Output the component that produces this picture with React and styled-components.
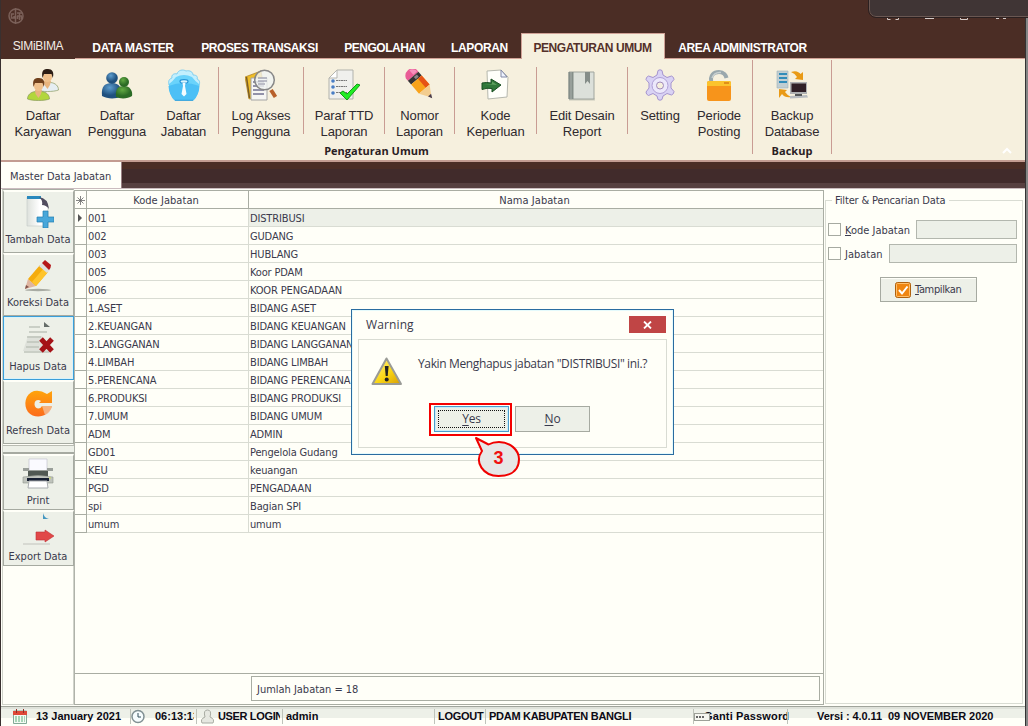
import React from 'react';
import styled, { createGlobalStyle, css } from 'styled-components';

const GlobalStyle = createGlobalStyle`
  * { box-sizing: border-box; }
  html, body { margin: 0; padding: 0; overflow: hidden; }
  body { background: #fffff8; }
`;

const ui = css`
  font-family: "DejaVu Sans Condensed", "DejaVu Sans", sans-serif;
  font-size: 11px;
  letter-spacing: -0.2px;
  color: #3a3a4c;
`;
const arial = css`
  font-family: "Liberation Sans", Arial, sans-serif;
`;

const Window = styled.div`
  position: relative;
  width: 1028px;
  height: 726px;
  overflow: hidden;
  display: flex;
  flex-direction: column;
  background: #fffff8;
  border-left: 1px solid #39302f;
  white-space: nowrap;
  ${ui}
`;
const Edge = styled.div`
  position: absolute;
  right: 0;
  top: 18px;
  bottom: 0;
  width: 3px;
  background: #858585;
  border-left: 1px solid #333;
`;
const TitleBar = styled.div`
  height: 33px;
  background: #4b2d25;
  padding: 8px 0 0 7px;
  flex: none;
`;
const CornerPanel = styled.div`
  position: absolute;
  left: 868px;
  top: -10px;
  width: 180px;
  height: 27px;
  background: #403535;
  border: 1px solid #6a5752;
  outline: 1px solid #2b2020;
  border-radius: 0 0 0 7px;
`;
const CornerMarks = styled.svg`
  position: absolute;
  left: 884px;
  top: 18px;
`;
const TabBar = styled.div`
  display: flex;
  height: 26px;
  flex: none;
  background: #4b2d25;
`;
const AppTab = styled.div`
  ${arial}
  width: 74px;
  font-size: 12px;
  letter-spacing: -0.35px;
  line-height: 27px;
  text-align: center;
  color: #f4ece6;
`;
const Tab = styled.div`
  ${arial}
  width: ${(p) => p.$w}px;
  height: 26px;
  font-size: 12px;
  font-weight: bold;
  letter-spacing: ${(p) => p.$ls ?? -0.42}px;
  padding-right: ${(p) => p.$pr ?? 0}px;
  line-height: ${(p) => (p.$active ? 28 : 30)}px;
  text-align: center;
  color: ${(p) => (p.$active ? '#54302a' : '#fff')};
  background: ${(p) => (p.$active ? '#f6f0de' : 'transparent')};
  border: solid #d0a297;
  border-width: ${(p) => (p.$active ? '1px 1px 0' : '0 0 1px')};
`;
const TabFill = styled.div`
  flex: 1;
  border-bottom: 1px solid #d0a297;
`;
const Ribbon = styled.div`
  position: relative;
  display: flex;
  height: 103px;
  flex: none;
  background: #f6f0de;
  border-bottom: 2px solid #c39c91;
`;
const RibbonGroup = styled.div`
  display: flex;
  flex-direction: column;
  width: ${(p) => p.$w}px;
  height: 94px;
  margin-top: 1px;
  border-right: 1px solid #c99c93;
`;
const RibbonItems = styled.div`
  display: flex;
  height: 81px;
  flex: none;
  padding-top: 7px;
`;
const RibbonItem = styled.div`
  ${arial}
  width: ${(p) => p.$w}px;
  height: 67px;
  border-right: ${(p) => (p.$sep ? '1px solid #c99c93' : '0')};
  display: flex;
  flex-direction: column;
  align-items: center;
  padding-top: 2px;
  font-size: 13px;
  letter-spacing: -0.12px;
  line-height: 16px;
  text-align: center;
  white-space: pre;
  color: #2f2a2e;
  svg { flex: none; margin-bottom: 7px; }
`;
const GroupTitle = styled.div`
  font-family: "Open Sans", "Noto Sans", sans-serif;
  font-weight: bold;
  font-size: 11px;
  letter-spacing: 0.02px;
  line-height: 20px;
  flex: none;
  text-align: center;
  color: #2a2024;
`;
const Collapse = styled.svg`
  position: absolute;
  left: 1001px;
  top: 88px;
`;
const DocTabs = styled.div`
  height: 26px;
  flex: none;
  background: linear-gradient(#4b2d25 0 7px, #412b2b 7px 21px, #574040 21px 26px);
`;
const DocTab = styled.div`
  width: 121px;
  height: 26px;
  background: #fffff8;
  border-right: 1px solid #9a8084;
  padding-left: 9px;
  line-height: 29px;
  letter-spacing: 0;
`;
const Body = styled.div`
  display: flex;
  width: 1024px;
  height: 518px;
  flex: none;
  border-top: 1px solid #cbbcbf;
  padding-left: 1px;
`;
const Sidebar = styled.div`
  width: 72px;
  height: 516px;
  border: 1px solid #d0d3ca;
  border-top-color: #a9ada3;
  display: flex;
  flex-direction: column;
`;
const ToolButton = styled.div`
  width: 71px;
  height: ${(p) => p.$h}px;
  flex: none;
  background: #edf0e8;
  border: 1px solid ${(p) => (p.$focus ? '#3b9ed8' : '#a6aaa1')};
  border-top: ${(p) => (p.$focus ? '1px solid #3b9ed8' : '2px solid #fffff8')};
  box-shadow: ${(p) => (p.$focus ? 'inset 0 0 0 1px #d8f3fa' : 'none')};
  display: flex;
  flex-direction: column;
  align-items: center;
  justify-content: flex-end;
  padding-bottom: ${(p) => p.$pb ?? 4}px;
  padding-right: 1px;
  line-height: 16px;
  letter-spacing: ${(p) => p.$ls ?? -0.03}px;
  svg { flex: none; margin-bottom: ${(p) => p.$gap ?? 3}px; }
`;
const ToolGap = styled.div`
  height: 9px;
  width: 71px;
  flex: none;
  background: #edf0e8;
  border-top: 1px solid #b9bcb3;
  border-bottom: 2px solid #a6aaa1;
  margin-top: 1px;
`;
const GridPanel = styled.div`
  width: 750px;
  height: 515px;
  margin-top: 1px;
  display: flex;
  flex-direction: column;
  border: 1px solid #a9ada3;
  border-left-color: #b0b3aa;
`;
const GridRow = styled.div`
  display: grid;
  grid-template-columns: 12px 162px 1fr;
  height: 18px;
  line-height: 17px;
`;
const HeadCell = styled.div`
  height: 18px;
  line-height: 19px;
  text-align: center;
  padding-right: 3px;
  letter-spacing: 0.05px;
  border-right: ${(p) => (p.$last ? 0 : 1)}px solid #a9ada3;
  border-bottom: 1px solid #a9ada3;
`;
const MarkCell = styled(HeadCell)`
  padding: 5px 0 0 1px;
  svg { display: block; }
`;
const Gutter = styled.div`
  border-right: 1px solid #a9ada3;
  border-bottom: 1px solid #a9ada3;
  display: flex;
  align-items: center;
  justify-content: center;
`;
const Cell = styled.div`
  padding-left: 1px;
  line-height: 19px;
  height: 18px;
  letter-spacing: -0.15px;
  overflow: hidden;
  background: ${(p) => (p.$sel ? '#edf0e8' : 'transparent')};
  border-bottom: 1px solid #d9dcd3;
  border-right: ${(p) => (p.$last ? 0 : 1)}px solid #d9dcd3;
`;
const GridFoot = styled.div`
  margin-top: auto;
  height: 31px;
  border-top: 1px solid #a9ada3;
  padding: 2px 3px 3px 176px;
`;
const Summary = styled.div`
  height: 25px;
  border: 1px solid #a9ada3;
  padding-left: 5px;
  line-height: 25px;
  letter-spacing: -0.02px;
`;
const FilterBox = styled.div`
  position: relative;
  width: 198px;
  height: 504px;
  margin: 11px 0 0 1px;
  border: 1px solid #d9dcd3;
  padding: 19px 5px 0 2px;
`;
const Legend = styled.div`
  position: absolute;
  left: 6px;
  top: -9px;
  padding: 0 4px 0 3px;
  line-height: 18px;
  letter-spacing: -0.15px;
  background: #fffff8;
`;
const FilterRow = styled.div`
  display: flex;
  align-items: center;
  height: 19px;
  margin-bottom: 5px;
  letter-spacing: 0;
  span { padding-top: 1px; }
  u { text-underline-offset: 1px; }
`;
const Check = styled.div`
  width: 13px;
  height: 13px;
  border: 1px solid #a6aaa1;
  margin-right: 4px;
`;
const Field = styled.div`
  margin-left: auto;
  width: ${(p) => p.$w}px;
  height: 19px;
  background: #edf0e8;
  border: 1px solid #b3b7ae;
`;
const ShowButton = styled.div`
  width: 97px;
  height: 25px;
  margin: 14px 0 0 52px;
  display: flex;
  align-items: center;
  gap: 4px;
  padding-left: 14px;
  letter-spacing: -0.35px;
  background: #edf0e8;
  border: 1px solid #a6aaa1;
  box-shadow: inset 0 1px #fffff8;
`;
const StatusBar = styled.div`
  ${arial}
  display: flex;
  height: 20px;
  flex: none;
  width: 1024px;
  font-size: 11px;
  font-weight: bold;
  color: #0c0a14;
  border-top: 1px solid #a0a49b;
  background: linear-gradient(#dfe2da 0 2px, #edf0e8 2px 11px, #fffff8 11px);
  padding-left: 12px;
`;
const StatusCell = styled.div`
  width: ${(p) => p.$w}px;
  height: 15px;
  margin-top: 2px;
  line-height: 14px;
  flex: none;
  letter-spacing: ${(p) => p.$ls ?? 0}px;
  padding-left: ${(p) => p.$pl ?? 3}px;
  border-left: ${(p) => (p.$sep ? '1px solid #bfc3ba' : '0')};
  svg { display: block; }
`;
const Inline = styled.div`
  display: flex;
  align-items: flex-start;
  gap: ${(p) => p.$gap}px;
  width: ${(p) => p.$w}px;
  overflow: ${(p) => (p.$w ? 'hidden' : 'visible')};
  svg { flex: none; }
`;
const Covered = styled.span`
  margin-left: -6px;
`;
const FrontIcon = styled.svg`
  position: relative;
  z-index: 1;
  margin-top: 4px;
`;

const Dialog = styled.div`
  position: absolute;
  left: 350px;
  top: 309px;
  width: 323px;
  height: 146px;
  border: 1px solid #2a6ca0;
  box-shadow: inset 0 0 0 1px #e4fafc;
  background: #fffff8;
  font-family: "Open Sans", "Noto Sans", sans-serif;
  font-size: 12px;
  letter-spacing: -0.2px;
  padding: 6px;
`;
const DialogHead = styled.div`
  display: flex;
  justify-content: space-between;
  height: 23px;
  padding: 0 1px 0 8px;
  line-height: 18px;
  letter-spacing: 0.12px;
`;
const Close = styled.div`
  width: 37px;
  height: 17px;
  background: #c04545;
  display: flex;
  align-items: center;
  justify-content: center;
`;
const DialogBody = styled.div`
  width: 309px;
  height: 109px;
  border: 1px solid #d9dcd3;
  padding: 17px 0 0 12px;
`;
const Message = styled.div`
  display: flex;
  gap: 15px;
  height: 49px;
  line-height: 13px;
  font-size: 12px;
  letter-spacing: -0.36px;
`;
const DialogButtons = styled.div`
  display: flex;
  gap: 6px;
  padding-left: 63px;
`;
const DialogButton = styled.div`
  position: relative;
  width: 75px;
  height: 26px;
  line-height: 24px;
  text-align: center;
  background: #edf0e8;
  border: 1px solid ${(p) => (p.$primary ? '#4b9bcb' : '#a6aaa1')};
  box-shadow: ${(p) => (p.$primary ? 'inset 0 0 0 1px #c9ecf8' : 'none')};
  u { text-underline-offset: 2px; }
`;
const FocusRect = styled.div`
  position: absolute;
  inset: 3px;
  border: 1px dotted #111;
`;
const Highlight = styled.div`
  position: absolute;
  left: 428px;
  top: 403px;
  width: 83px;
  height: 33px;
  border: 2px solid #f40000;
`;
const Callout = styled.div`
  ${arial}
  position: absolute;
  left: 469px;
  top: 434px;
  width: 56px;
  height: 46px;
  padding: 12px 0 0 1px;
  text-align: center;
  font-size: 18px;
  font-weight: bold;
  letter-spacing: 0;
  line-height: 24px;
  color: #f01010;
  svg { position: absolute; left: 0; top: 0; }
  span { position: relative; }
`;

const Person = ({ x, y, body, hair }) => (
  <g transform={`translate(${x} ${y})`}>
    <path d="M.5 21c0-4 3-7 8-7.500h6c5 .5 8 3.500 8 7.500-5 2-17 2-22 0z" fill={body} stroke="#8a9a60" strokeWidth=".7" />
    <path d="M8 12h7l-1 4-2.500 4-3-4z" fill="#e8b47e" />
    <ellipse cx="11.500" cy="7.500" rx="4.600" ry="5.500" fill="#efc08c" />
    <path d="M6.500 9C5 1 8 0 12 0s6.500 3 4.800 9L15.500 5 8 5z" fill={hair} />
  </g>
);

const Icons = {
  employees: (
    <svg width="32" height="32" viewBox="0 0 32 32">
      <Person x={9} y={0} body="#e6eef2" hair="#2c1d14" />
      <Person x={0} y={9} body="#b2d63c" hair="#70401c" />
    </svg>
  ),
  users: (
    <svg width="32" height="32" viewBox="0 0 32 32">
      <defs>
        <radialGradient id="ub" cx=".4" cy=".3"><stop stopColor="#5d9dce" /><stop offset="1" stopColor="#20517f" /></radialGradient>
        <radialGradient id="ug" cx=".4" cy=".3"><stop stopColor="#62aa42" /><stop offset="1" stopColor="#2b6b25" /></radialGradient>
      </defs>
      <path d="M1 27c-1-10 3-13 10-13s11 5 9 14c-6 2-14 2-19-1z" fill="url(#ub)" />
      <circle cx="11" cy="9" r="5.800" fill="url(#ub)" />
      <path d="M15 28c-1-8 2-11 8-11s9 5 8 10c-4 3-12 3-16 1z" fill="url(#ug)" />
      <circle cx="23" cy="13" r="5" fill="url(#ug)" />
    </svg>
  ),
  jabatan: (
    <svg width="34" height="32" viewBox="0 0 34 32">
      <path d="M2 16c-1-4 0-6 3-7-1-3 2-5 5-4 1-4 6-5 9-3 4-1 7 1 7 4 4 0 5 2 4 4 3 1 3 4 2 7z" fill="#c3effd" stroke="#6cc6f0" strokeWidth=".8" />
      <path d="M2 15Q6 12 9 8q8-4 16 0 3 4 7 7 1 10-6 16H8Q1 25 2 15z" fill="#6ad3fb" />
      <path d="M1.500 17q15-6 31 0-.5 9-6 14.500h-19Q2 26 1.500 17z" fill="#4cc0f6" />
      <path d="M8 31.300h18" stroke="#2e9fdb" strokeWidth="1" />
      <ellipse cx="17" cy="12.500" rx="4" ry="1.800" fill="#d8f5ff" stroke="#2695d8" strokeWidth="1.200" />
      <path d="M15.500 14h3l-.5 3 1.500 8-2.500 2.500-2.500-2.500L16 17z" fill="#f4fcff" />
    </svg>
  ),
  log: (
    <svg width="32" height="32" viewBox="0 0 32 32">
      <path d="M0 8 16 2l4 23L4 30z" fill="#efbd28" stroke="#a77a16" strokeWidth=".7" />
      <path d="m1.500 8 3 21" stroke="#795c27" strokeWidth="1.500" />
      <path d="M6 9h16v22H6z" fill="#f6f6f4" stroke="#a4a4a4" />
      <path d="M8 13h11M8 17h11M8 21h11M8 25h11" stroke="#717191" strokeWidth="1.300" />
      <path d="m26 21 4.500 7" stroke="#b8602a" strokeWidth="4" />
      <circle cx="19.500" cy="11" r="9.800" fill="#f0f4f2" fillOpacity=".8" stroke="#878787" strokeWidth="1.500" />
      <path d="M13 9h9M13 12h9M13 15h7" stroke="#85859b" strokeWidth="1.200" />
    </svg>
  ),
  paraf: (
    <svg width="32" height="32" viewBox="0 0 32 32">
      <path d="M9 1h16v29H1V9z" fill="#f0f0ed" stroke="#b1b2ac" />
      <path d="M1 9h8V1z" fill="#fff" stroke="#b5b5b0" />
      {[12, 18, 24].map((y) => (
        <g key={y}><circle cx="5" cy={y} r="1.800" fill="#487dc5" /><path d={`M8 ${y - 0.5}h11`} stroke="#777" strokeDasharray="2 .5" /></g>
      ))}
      <path d="m12 24 3-2 4 3 10-10 3 1-13 15z" fill="#20ee24" stroke="#159a1a" />
    </svg>
  ),
  pencil: (
    <svg width="32" height="32" viewBox="0 0 32 32">
      <g transform="translate(8.500 6.500) rotate(49)">
        <path d="M-2-7q-5 2-5 7t5 7h3V-7z" fill="#e95c96" />
        <path d="M-2-6q-4 2-4 5h6v-5z" fill="#f590bd" />
        <path d="M1-7h5V7H1z" fill="#353235" />
        <path d="M2-4h3v4H2z" fill="#8b8588" />
        <path d="M6-7h12V7H6z" fill="#f9a31b" />
        <path d="M6-7h12v5H6z" fill="#e65316" />
        <path d="M18-7 29 0 18 7z" fill="#f3cd8f" />
        <path d="m26-2 4 2-4 2z" fill="#473b4b" />
      </g>
    </svg>
  ),
  kode: (
    <svg width="32" height="32" viewBox="0 0 32 32">
      <path d="M7 2 21 1l7 7-1 20-19 2z" fill="#fffffa" stroke="#b6b8ae" />
      <path d="m21 1 0 7h6z" fill="#eef3ff" stroke="#8289a5" />
      <path d="M2 14q5-1 9 0v-4l10 6-9 7v-3.500q-5-1-10 1z" fill="#30783a" stroke="#194f22" />
      <path d="M4 15h8v-2.500l5 3.500z" fill="#5fa260" />
    </svg>
  ),
  book: (
    <svg width="32" height="32" viewBox="0 0 32 32">
      <path d="M3 29.500h26v2H3z" fill="#9fa39c" opacity=".5" />
      <path d="M3 3h25v27H3z" fill="#dce0da" stroke="#a0a59e" />
      <path d="M2.500 3h5v27h-5z" fill="#858e89" />
      <path d="M5 3v27" stroke="#aab1ad" />
      <path d="M19 3h5v12l-2.500-3-2.500 3z" fill="#858d89" />
    </svg>
  ),
  gear: (
    <svg width="32" height="32" viewBox="0 0 32 32">
      <path d="M14 1.500q2-1.500 4 0l1 4.500 4 2.500 4.500-1.500q2.500 1 2.500 3.500l-3 3.500v5l3 3.500q0 2.500-2.500 3.500L23 24.500 19 27l-1 3.500q-2 1.500-4 0L13 27l-4-2.500L4.500 26.500Q2 25.500 2 23l3-4v-5l-3-3.500Q2 8 4.500 7L9 8.500 13 6z" fill="#d9d2f4" stroke="#a594cf" />
      <circle cx="16" cy="16.500" r="8" fill="#ece8fb" stroke="#b0a0d7" />
      <circle cx="16" cy="16.500" r="3.500" fill="#f6f0de" stroke="#a18abb" />
    </svg>
  ),
  lock: (
    <svg width="32" height="32" viewBox="0 0 32 32">
      <path d="M8.500 14C6.500 6 11 3 16 3S23 7 23.500 9" fill="none" stroke="#9aa8ad" strokeWidth="4" />
      <path d="M9 9C10.500 5 14 3 18 3.500" fill="none" stroke="#c8d0d1" strokeWidth="1.500" />
      <rect x="4" y="12" width="24" height="20" rx="2" fill="#f7941b" />
      <path d="M4 17v-3q0-2 2-2h20q2 0 2 2v3z" fill="#fbc32d" />
      <path d="M21 14h5" stroke="#d97d12" strokeWidth="1.500" />
    </svg>
  ),
  backup: (
    <svg width="32" height="32" viewBox="0 0 32 32">
      <path d="M1 2h11v17H1z" fill="#c1ced2" stroke="#9db1b9" strokeWidth=".6" />
      <path d="M3 5h8M3 9h8M3 13h8" stroke="#318cb9" strokeWidth="1.800" />
      <path d="M15 3c5-2 8 0 9.500 2l2.500-2v8l-8-1 2-2q-2-3.500-6-5z" fill="#e99a16" />
      <path d="m3 20 8 1-2 2q2 3 6 5-6 1-9-3l-3 4z" fill="#e99a16" />
      <path d="M14 13h17v12H14z" fill="#aeb0b2" />
      <path d="M15.500 14.500H30V23H15.500z" fill="#302027" />
      <path d="m14 27 17-1 1 2.500-18 1z" fill="#b8bcc0" />
      <path d="M19 25h7v2h-7z" fill="#55585a" />
    </svg>
  ),
  add: (
    <svg width="32" height="32" viewBox="0 0 32 32">
      <defs><linearGradient id="pg"><stop stopColor="#dde1dc" /><stop offset=".6" stopColor="#fff" /></linearGradient></defs>
      <path d="M5 1h13l8 9v20H5z" fill="url(#pg)" stroke="#c5cac6" strokeWidth=".6" />
      <path d="M5 0h14v3H5z" fill="#2988bd" />
      <path d="M17 1q9 1 10 12-3-4-7-4 1-5-3-8z" fill="#514d60" />
      <path d="M21 15h5v6h6v5h-6v6h-5v-6h-6v-5h6z" fill="#48a7da" stroke="#237faf" strokeWidth=".7" />
    </svg>
  ),
  edit: (
    <svg width="32" height="32" viewBox="0 0 32 32">
      <ellipse cx="16" cy="30" rx="13" ry="1.200" fill="#a8aba3" />
      <path d="m3 29 3-10 8 7z" fill="#dfb5a0" />
      <path d="m3 29 1-4 3 2z" fill="#82544b" />
      <path d="M6 19 18 5l8 7-12 14z" fill="#f5ac0c" />
      <path d="m10 22 12-14 4 4-12 14z" fill="#ffc42b" />
      <path d="m17 6 3-3 8 7-3 3z" fill="#dedfdf" />
      <path d="m20 3 3-3 6 5q0 3-2 5z" fill="#b5171a" />
    </svg>
  ),
  remove: (
    <svg width="32" height="32" viewBox="0 0 32 32">
      <path d="M6 14h14l7 15H1z" fill="#d6d9d2" opacity=".65" />
      <path d="M7 5h11M7 10h18M5 15h14M5 20h12M4 25h13M2 30h25" stroke="#bfc3bb" strokeWidth="1.500" />
      <path d="M22 0v5h6z" fill="#666d69" />
      <path d="m19 17 11 12m0-12L19 29" stroke="#a51217" strokeWidth="5" />
    </svg>
  ),
  refresh: (
    <svg width="32" height="32" viewBox="0 0 32 32">
      <defs><linearGradient id="rg" x1="0" x2="0" y1="0" y2="1"><stop stopColor="#ffa40c" /><stop offset="1" stopColor="#fc6c1c" /></linearGradient></defs>
      <path d="M25 6Q18 1.500 12 3C3 6 1 17 6 24c7 8 21 5 24-6H20c-2 4-7 3-7.500-1.500-.3-4.500 4-5.500 6.500-3.500l-2 2h13V3z" fill="url(#rg)" />
      <path d="M20 18h10q-1.500 7-7 9z" fill="#f3c4a4" opacity=".75" />
    </svg>
  ),
  print: (
    <svg width="32" height="32" viewBox="0 0 32 32">
      <path d="M7 1h18v12H7z" fill="#fafaff" stroke="#bcbccb" strokeWidth=".6" />
      <path d="M1 10h6v2h18v-2h6v3H1z" fill="#9a9f9a" />
      <path d="M6 13h20v6H6z" fill="#505852" />
      <path d="M1 19q15-3 30 0v6H1z" fill="#bfc3bc" stroke="#92978f" strokeWidth=".6" />
      <path d="M5 20h22v3H5z" fill="#182032" />
      <path d="M7 23h18l1 7H6z" fill="#fff" stroke="#a9adb0" />
      <path d="M27 20h2" stroke="#d1df58" />
    </svg>
  ),
  exportData: (
    <svg width="32" height="34" viewBox="0 0 32 34">
      <path d="M21 0q1 5 6 6h-6z" fill="#4597c0" />
      <path d="M1 31h27" stroke="#cfd2cb" strokeWidth="1.500" />
      <path d="M14 19h9v-2l9 6-9 6v-2h-9z" fill="#e14848" stroke="#bf3036" strokeWidth=".6" />
    </svg>
  ),
};

const ribbonMain = [
  ['Daftar\nKaryawan', 'employees', 84],
  ['Daftar\nPengguna', 'users', 64],
  ['Daftar\nJabatan', 'jabatan', 70, true],
  ['Log Akses\nPengguna', 'log', 85, true],
  ['Paraf TTD\nLaporan', 'paraf', 81, true],
  ['Nomor\nLaporan', 'pencil', 70, true],
  ['Kode\nKeperluan', 'kode', 82, true],
  ['Edit Desain\nReport', 'book', 91, true],
  ['Setting', 'gear', 64],
  ['Periode\nPosting', 'lock', 54],
];

const rows = [
  ['001', 'DISTRIBUSI'], ['002', 'GUDANG'], ['003', 'HUBLANG'], ['005', 'Koor PDAM'],
  ['006', 'KOOR PENGADAAN'], ['1.ASET', 'BIDANG ASET'], ['2.KEUANGAN', 'BIDANG KEUANGAN'],
  ['3.LANGGANAN', 'BIDANG LANGGANAN'], ['4.LIMBAH', 'BIDANG LIMBAH'], ['5.PERENCANA', 'BIDANG PERENCANA'],
  ['6.PRODUKSI', 'BIDANG PRODUKSI'], ['7.UMUM', 'BIDANG UMUM'], ['ADM', 'ADMIN'],
  ['GD01', 'Pengelola Gudang'], ['KEU', 'keuangan'], ['PGD', 'PENGADAAN'], ['spi', 'Bagian SPI'], ['umum', 'umum'],
];

function DateCell() {
  return (
    <Inline $gap={9}>
      <svg width="14" height="15" viewBox="0 0 14 15"><path d="M.5 2h13v12.500H.5z" fill="#f4faf4" stroke="#83aa97" /><path d="M0 2h14v4H0z" fill="#df4938" /><path d="M3.500 0v4M10.500 0v4" stroke="#8d302a" /><path d="M2 8h10M2 10h10M2 12h10" stroke="#5ab278" strokeDasharray="2 1" /></svg>
      13 January 2021
    </Inline>
  );
}
function TimeCell() {
  return (
    <Inline $gap={10} $w={63}>
      <svg width="14" height="15" viewBox="0 0 14 15"><circle cx="7" cy="7.500" r="6" fill="#f6fcfd" stroke="#819093" strokeWidth="1.500" /><path d="M7 4v4h3" fill="none" stroke="#334f5b" /></svg>
      06:13:13
    </Inline>
  );
}
function UserCell() {
  return (
    <Inline $gap={4} $w={79}>
      <svg width="13" height="15" viewBox="0 0 13 15"><path d="M1 14q-2-4 3-6-2-7 2.500-7T9 8q5 2 3 6z" fill="#e6e8e1" stroke="#a8aba2" /></svg>
      USER LOGIN
    </Inline>
  );
}
function PasswordCell() {
  return (
    <Inline $gap={0}>
      <FrontIcon width="16" height="8" viewBox="0 0 16 8"><rect x=".5" y=".5" width="15" height="7" fill="#f5f6f0" stroke="#9da098" /><path d="M2 4h9" stroke="#666" strokeWidth="2" strokeDasharray="2 1" /></FrontIcon>
      <Covered>Ganti Password</Covered>
    </Inline>
  );
}

export default function App() {
  return (
    <Window>
      <GlobalStyle />
      <TitleBar>
        <svg width="16" height="16" viewBox="0 0 16 16" fill="none" stroke="#7b6059" strokeWidth="1.500">
          <circle cx="8" cy="8" r="7" />
          <path d="M7.500 0v16M6 6H3.500v4H6V8M9 5h5M9 8h5M11.500 5v7M9.500 11V8M13.500 11V8" />
        </svg>
      </TitleBar>
      <TabBar>
        <AppTab>SIMiBIMA</AppTab>
        <Tab $w={116} $ls={-0.35}>DATA MASTER</Tab>
        <Tab $w={137}>PROSES TRANSAKSI</Tab>
        <Tab $w={114} $pr={1} $ls={-0.5}>PENGOLAHAN</Tab>
        <Tab $w={79} $ls={-0.36} $pr={4}>LAPORAN</Tab>
        <Tab $w={144} $active $pr={1}>PENGATURAN UMUM</Tab>
        <Tab $w={156} $pr={1}>AREA ADMINISTRATOR</Tab>
        <TabFill />
      </TabBar>
      <Ribbon>
        <RibbonGroup $w={752}>
          <RibbonItems>
            {ribbonMain.map(([label, icon, w, sep]) => (
              <RibbonItem key={icon} $w={w} $sep={sep}>{Icons[icon]}{label}</RibbonItem>
            ))}
          </RibbonItems>
          <GroupTitle>Pengaturan Umum</GroupTitle>
        </RibbonGroup>
        <RibbonGroup $w={79}>
          <RibbonItems>
            <RibbonItem $w={78}>{Icons.backup}{'Backup\nDatabase'}</RibbonItem>
          </RibbonItems>
          <GroupTitle>Backup</GroupTitle>
        </RibbonGroup>
        <Collapse width="10" height="7" viewBox="0 0 10 7" fill="none" stroke="#fff" strokeWidth="2"><path d="m1 6 4-4 4 4" /></Collapse>
      </Ribbon>
      <DocTabs><DocTab>Master Data Jabatan</DocTab></DocTabs>
      <Body>
        <Sidebar>
          <ToolButton $h={63} $pb={4} $gap={4}>{Icons.add}Tambah Data</ToolButton>
          <ToolButton $h={63} $pb={4} $gap={3}>{Icons.edit}Koreksi Data</ToolButton>
          <ToolButton $h={64} $focus $pb={4} $gap={5}>{Icons.remove}Hapus Data</ToolButton>
          <ToolButton $h={64} $pb={4} $gap={3} $ls={0}>{Icons.refresh}Refresh Data</ToolButton>
          <ToolGap />
          <ToolButton $h={56} $pb={0} $gap={3}>{Icons.print}Print</ToolButton>
          <ToolButton $h={56} $pb={0} $gap={2}>{Icons.exportData}Export Data</ToolButton>
        </Sidebar>
        <GridPanel>
          <GridRow>
            <MarkCell>
              <svg width="9" height="9" viewBox="0 0 9 9" stroke="#666" strokeWidth=".8"><path d="M4.500 0v9M0 4.500h9M1.500 1.500l6 6M7.500 1.500l-6 6" /></svg>
            </MarkCell>
            <HeadCell>Kode Jabatan</HeadCell>
            <HeadCell $last>Nama Jabatan</HeadCell>
          </GridRow>
          {rows.map(([kode, nama], i) => (
            <GridRow key={kode}>
              <Gutter>{i === 0 && <svg width="5" height="8"><path d="m0 0 4 4-4 4z" fill="#555" /></svg>}</Gutter>
              <Cell>{kode}</Cell>
              <Cell $sel={i === 0} $last>{nama}</Cell>
            </GridRow>
          ))}
          <GridFoot><Summary>Jumlah Jabatan = 18</Summary></GridFoot>
        </GridPanel>
        <FilterBox>
          <Legend>Filter &amp; Pencarian Data</Legend>
          <FilterRow><Check /><span><u>K</u>ode Jabatan</span><Field $w={101} /></FilterRow>
          <FilterRow><Check /><span><u>J</u>abatan</span><Field $w={128} /></FilterRow>
          <ShowButton>
            <svg width="16" height="16" viewBox="0 0 16 16"><rect x=".5" y=".5" width="15" height="15" rx="2" fill="#ef8510" stroke="#ae600e" /><rect x="1.500" y="1.500" width="13" height="13" rx="1" fill="none" stroke="#ffbf6b" /><path d="m4 8 3 3.500 5.500-7" fill="none" stroke="#fff" strokeWidth="2" /></svg>
            <span><u>T</u>ampilkan</span>
          </ShowButton>
        </FilterBox>
      </Body>
      <StatusBar>
        <StatusCell $w={117} $pl={0}><DateCell /></StatusCell>
        <StatusCell $w={66} $sep $pl={0}><TimeCell /></StatusCell>
        <StatusCell $w={86} $sep $pl={4} $ls={-0.35}><UserCell /></StatusCell>
        <StatusCell $w={152} $sep>admin</StatusCell>
        <StatusCell $w={51} $sep $ls={-0.28}>LOGOUT</StatusCell>
        <StatusCell $w={208} $sep $ls={-0.28}>PDAM KABUPATEN BANGLI</StatusCell>
        <StatusCell $w={94} $sep $pl={0} $ls={0.15}><PasswordCell /></StatusCell>
        <StatusCell $w={230} $sep $pl={29} $ls={-0.07}>Versi : 4.0.11&nbsp; 09 NOVEMBER 2020</StatusCell>
      </StatusBar>

      <Dialog>
        <DialogHead>
          <span>Warning</span>
          <Close><svg width="9" height="8" viewBox="0 0 9 8" stroke="#fff" strokeWidth="1.800"><path d="m1 .5 7 7M8 .5l-7 7" /></svg></Close>
        </DialogHead>
        <DialogBody>
          <Message>
            <svg width="32" height="29" viewBox="0 0 32 29">
              <defs><linearGradient id="wg" x1="0" y1="0" x2="1" y2="1"><stop stopColor="#fff59a" /><stop offset=".55" stopColor="#fbd715" /><stop offset="1" stopColor="#d79d05" /></linearGradient></defs>
              <path d="M15.500 1.500 30 27H1.500z" fill="url(#wg)" stroke="#9a9b96" strokeWidth="2" strokeLinejoin="round" />
              <path d="M13.800 9h3.800l-.9 10h-2z" fill="#222" />
              <circle cx="15.700" cy="22.500" r="2" fill="#222" />
            </svg>
            <span>Yakin Menghapus jabatan "DISTRIBUSI" ini.?</span>
          </Message>
          <DialogButtons>
            <DialogButton $primary><u>Y</u>es<FocusRect /></DialogButton>
            <DialogButton><u>N</u>o</DialogButton>
          </DialogButtons>
        </DialogBody>
      </Dialog>
      <Highlight />
      <Callout>
        <svg width="56" height="46" viewBox="0 0 56 46"><path d="M18.500 10.500 6 4l6 13C4 28 13 42 28.500 42S49 34 49 25 40 8 29 8Q23 8 18.500 10.500z" fill="#e6e6e6" stroke="#f00000" strokeWidth="2" strokeLinejoin="round" /></svg>
        <span>3</span>
      </Callout>
      <CornerPanel />
      <CornerMarks width="126" height="4" viewBox="0 0 126 4" stroke="#d5cbc8" fill="none">
        <path d="M2.500 0v1.500h3M13.500 0v1.500h-3M40 .5h9M75.500 0v1.500h7V0M111 .5h3m4 0h3" />
      </CornerMarks>
      <Edge />
    </Window>
  );
}
